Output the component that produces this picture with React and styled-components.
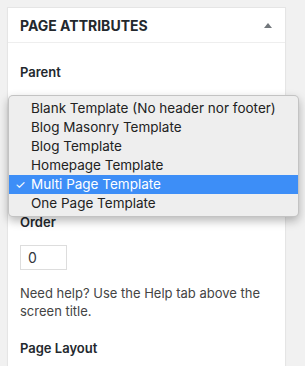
import React from "react";
import styled, { createGlobalStyle } from "styled-components";

const GlobalStyle = createGlobalStyle`
    html, body {
        margin: 0;
        padding: 0;
        background: #f1f1f1;
        font-family: Inter, "Noto Sans", sans-serif;
        color: #444;
    }
`;

const templates = [
    "Blank Template (No header nor footer)",
    "Blog Masonry Template",
    "Blog Template",
    "Homepage Template",
    "Multi Page Template",
    "One Page Template",
];

export default function App() {
    return (
        <Page>
            <GlobalStyle />
            <Panel>
                <Header>
                    <Title>Page Attributes</Title>
                    <Toggle />
                </Header>
                <Inside>
                    <Label>Parent</Label>
                    <SelectSpacer />
                    <Label>Order</Label>
                    <NumberInput defaultValue="0" />
                    <Help>Need help? Use the Help tab above the screen title.</Help>
                    <Label>Page Layout</Label>
                </Inside>
            </Panel>
            <Menu>
                {templates.map((t) => (
                    <Item key={t} selected={t === "Multi Page Template"}>
                        {t === "Multi Page Template" && <Check>✓</Check>}
                        {t}
                    </Item>
                ))}
            </Menu>
        </Page>
    );
}

const Page = styled.div`
    position: relative;
    height: 366px;
    overflow: hidden;
    padding: 7px 19px 0 7px;
`;

const Panel = styled.div`
    background: #fff;
    border: 1px solid #e5e5e5;
    box-shadow: 0 1px 1px rgba(0, 0, 0, 0.04);
    height: 400px;
`;

const Header = styled.div`
    display: flex;
    align-items: center;
    justify-content: space-between;
    height: 34px;
    padding: 0 13px 0 12px;
    border-bottom: 1px solid #eee;
`;

const Title = styled.h2`
    margin: 0;
    font-size: 14px;
    font-weight: 700;
    text-transform: uppercase;
    color: #23282d;
`;

const Toggle = styled.span`
    width: 0;
    height: 0;
    border-left: 4px solid transparent;
    border-right: 4px solid transparent;
    border-bottom: 5px solid #72777c;
`;

const Inside = styled.div`
    padding: 19px 12px 0;
    display: flex;
    flex-direction: column;
    align-items: flex-start;
`;

const Label = styled.p`
    margin: 0;
    font-size: 13px;
    line-height: 20px;
    font-weight: 600;
    color: #23282d;
`;

const SelectSpacer = styled.div`
    height: 130px;
`;

const NumberInput = styled.input`
    box-sizing: border-box;
    width: 47px;
    height: 25px;
    margin-top: 13px;
    padding: 0 7px;
    border: 1px solid #ddd;
    font-family: inherit;
    font-size: 14px;
    color: #32373c;
    outline: none;
`;

const Help = styled.p`
    margin: 14px 0 18px;
    font-size: 13px;
    line-height: 18px;
    color: #444;
`;

const Menu = styled.div`
    position: absolute;
    left: 8px;
    top: 95px;
    width: 291px;
    box-sizing: border-box;
    padding: 3px 0;
    background: #eeeeee;
    border: 1px solid rgba(0, 0, 0, 0.18);
    border-radius: 5px;
    box-shadow: 0 4px 10px rgba(0, 0, 0, 0.28);
`;

const Item = styled.div`
    position: relative;
    height: 19px;
    line-height: 19px;
    padding-left: 22px;
    font-size: 13.5px;
    color: ${(p) => (p.selected ? "#fff" : "#222")};
    background: ${(p) => (p.selected ? "#3d8ef7" : "transparent")};
`;

const Check = styled.span`
    position: absolute;
    left: 6px;
    top: 0;
    font-size: 12px;
`;
